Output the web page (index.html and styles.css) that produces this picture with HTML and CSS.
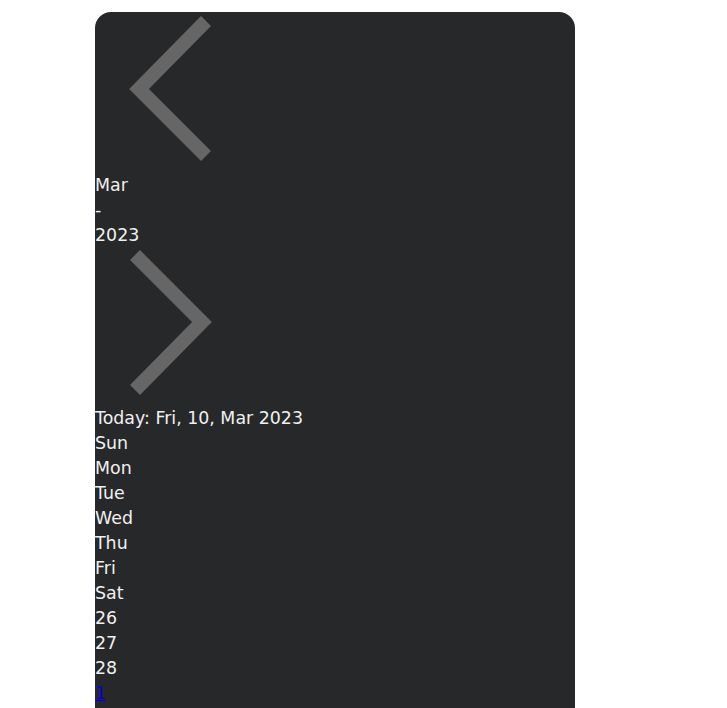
FILE: index.html
```html
<!DOCTYPE html>
<html lang="en">
<head>
<meta charset="utf-8">
<title>Calendar</title>
<link rel="stylesheet" href="styles.css">
</head>
<body>
<div class="calendar">
  <div class="header">
    <div class="nav prev">
      <svg class="chev chev-prev" width="160" height="161" viewBox="0 0 160 161"><polyline points="111,9 44,77 111,144"/></svg>
    </div>
    <div class="month">Mar</div>
    <div class="sep">-</div>
    <div class="year">2023</div>
    <div class="nav next">
      <svg class="chev chev-next" width="160" height="158" viewBox="0 0 160 158"><polyline points="40,7 107,74 40,142"/></svg>
    </div>
  </div>
  <div class="today">Today: Fri, 10, Mar 2023</div>
  <div class="weekdays">
    <div>Sun</div><div>Mon</div><div>Tue</div><div>Wed</div><div>Thu</div><div>Fri</div><div>Sat</div>
  </div>
  <div class="days">
    <div class="other">26</div>
    <div class="other">27</div>
    <div class="other">28</div>
    <div><a href="#">1</a></div>
  </div>
</div>
</body>
</html>
```
FILE: styles.css
```css
html, body {
  margin: 0;
  padding: 0;
  background: #ffffff;
}
body {
  font-family: "DejaVu Sans", sans-serif;
  font-size: 17.4px;
  line-height: 25px;
}
.calendar {
  width: 480px;
  margin: 12px 0 0 95px;
  padding-bottom: 40px;
  background: #27282a;
  color: #f0f0f0;
  border-radius: 16px;
  overflow: hidden;
}
.chev {
  display: block;
}
.chev polyline {
  fill: none;
  stroke: #666666;
  stroke-width: 14;
  stroke-linejoin: miter;
  stroke-linecap: butt;
}
.days a {
  color: #0000ee;
  text-decoration: underline;
}
```
